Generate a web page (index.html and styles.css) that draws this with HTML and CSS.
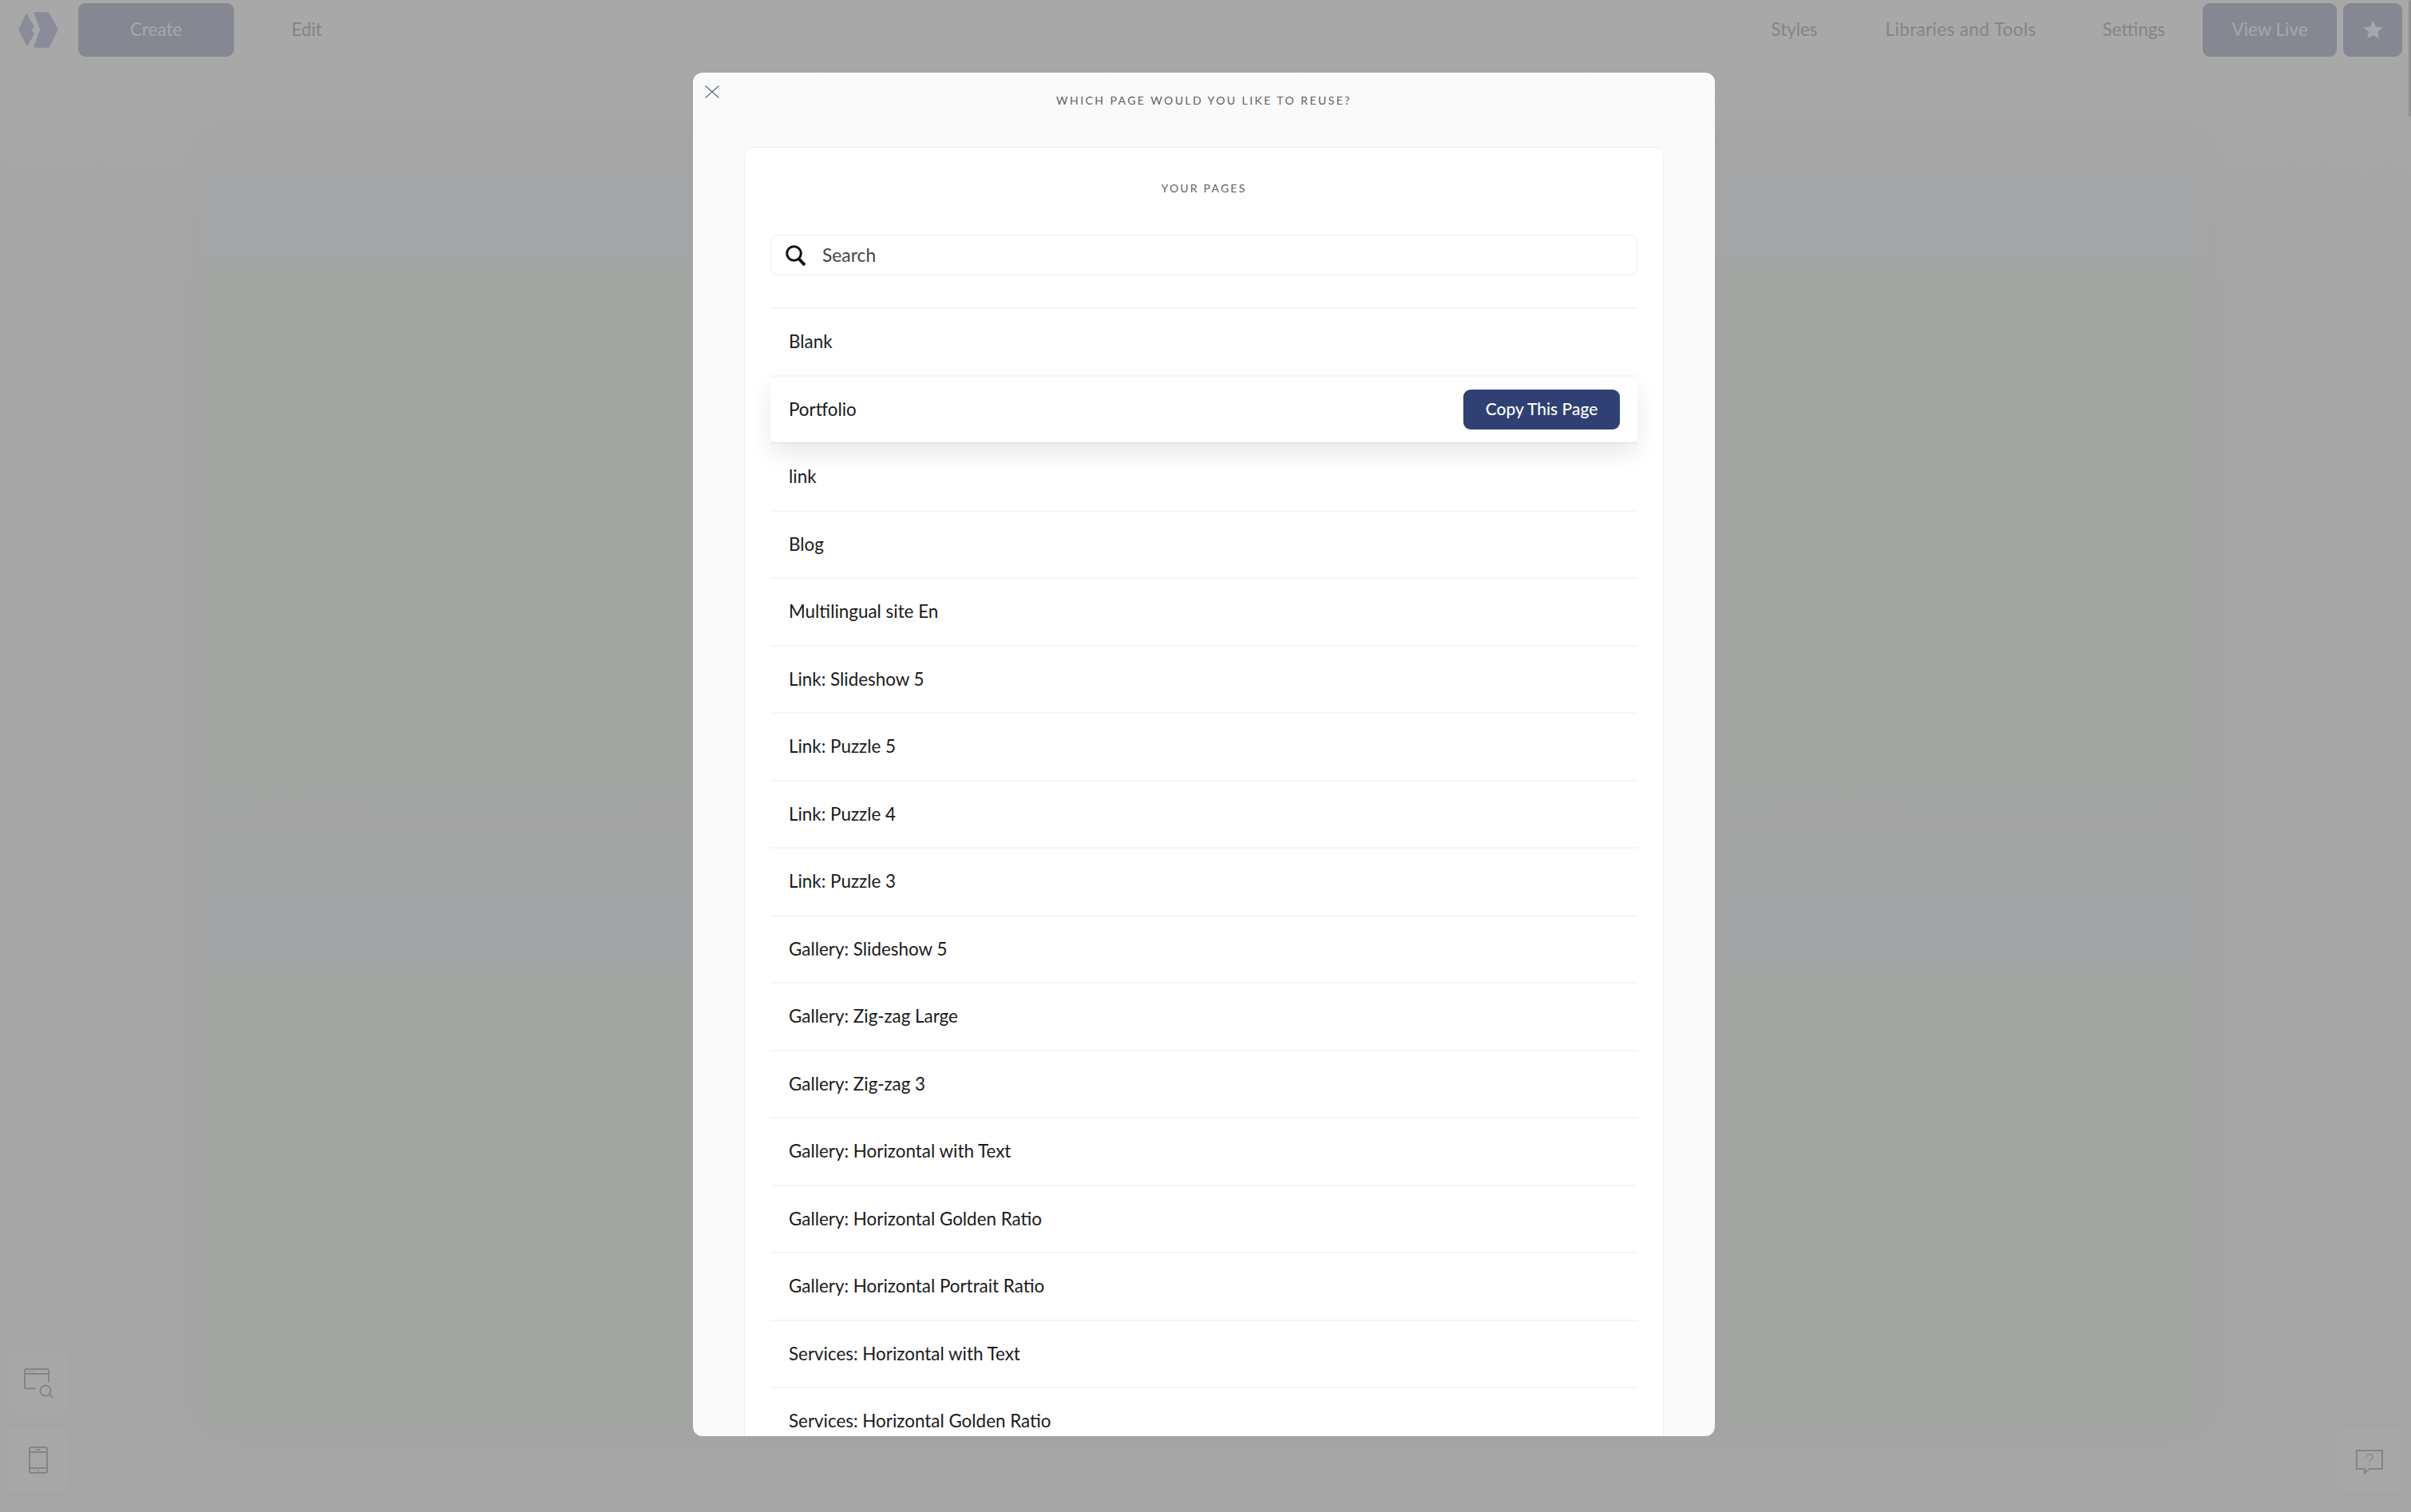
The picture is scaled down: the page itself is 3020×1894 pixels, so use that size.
FILE: index.html
```html
<!DOCTYPE html>
<html lang="en">
<head>
<meta charset="utf-8">
<title>Which page would you like to reuse?</title>
<link rel="stylesheet" href="styles.css">
</head>
<body>
<div class="app">
  <header class="topbar">
    <svg class="logo" viewBox="0 0 50 45" aria-hidden="true"><path d="M1 22 10 3l9 15-3 5 3 5-8 14z"/><path d="M20 1h18l11 21-11 22H20l8-22z"/></svg>
    <nav class="nav-left">
      <a class="btn btn-create">Create</a>
      <a class="nav-link nav-edit">Edit</a>
    </nav>
    <nav class="nav-right">
      <a class="nav-link nav-styles">Styles</a>
      <a class="nav-link nav-libs">Libraries and Tools</a>
      <a class="nav-link nav-settings">Settings</a>
      <a class="btn btn-live">View Live</a>
      <a class="btn btn-star"><svg viewBox="0 0 24 24" aria-hidden="true"><path d="M12 1.500l3.200 7 7.300.8-5.400 5 1.500 7.400L12 18l-6.600 3.700 1.500-7.400-5.400-5 7.300-.8z"/></svg></a>
    </nav>
  </header>
  <main class="stage">
    <div class="canvas"></div>
  </main>
  <div class="scroll-thumb"></div>
  <aside class="tools-left">
    <div class="tile"><svg viewBox="0 0 36 36" aria-hidden="true"><path d="M15 25.300H2.500a1.500 1.500 0 0 1-1.500-1.500V2.500A1.500 1.500 0 0 1 2.500 1h27A1.500 1.500 0 0 1 31 2.500v15M1 7h30"/><path class="dots" d="M5.500 4.200h1M8 4.200h1M10.500 4.200h1"/><circle cx="27" cy="28" r="6.500"/><path d="M31.500 32.500l4.500 4"/></svg></div>
    <div class="tile"><svg viewBox="0 0 36 36" aria-hidden="true"><rect x="7" y="2" width="22" height="32" rx="2"/><path d="M7 8h22M7 28h22M15.500 5h5M17 31h2"/></svg></div>
  </aside>
  <aside class="tools-right">
    <div class="tile"><svg class="thin" viewBox="0 0 36 36" aria-hidden="true"><path class="bubble" d="M2 6h32v23H18l-6 5v-5H2z"/><path d="M14 14.500c0-5 8-5 8-.5 0 3-4 3-4 6.500M18 23v1.500"/></svg></div>
  </aside>
</div>

<div class="modal-wrap">
  <section class="modal">
    <button class="close" aria-label="Close"><svg viewBox="0 0 18 16" preserveAspectRatio="none" aria-hidden="true"><path d="M.5.500l17 15M17.500.500l-17 15"/></svg></button>
    <h1 class="modal-title">WHICH PAGE WOULD YOU LIKE TO REUSE?</h1>
    <div class="card">
      <h2 class="card-title">YOUR PAGES</h2>
      <div class="search">
        <svg viewBox="0 0 26 26" aria-hidden="true"><circle cx="10.500" cy="10.500" r="8.800"/><path class="handle" d="M16.500 17l7.500 8"/></svg>
        <span>Search</span>
      </div>
      <ul class="pages">
        <li class="row"><span>Blank</span></li>
        <li class="row row-active"><span>Portfolio</span><a class="copy">Copy This Page</a></li>
        <li class="row"><span>link</span></li>
        <li class="row"><span>Blog</span></li>
        <li class="row"><span>Multilingual site En</span></li>
        <li class="row"><span>Link: Slideshow 5</span></li>
        <li class="row"><span>Link: Puzzle 5</span></li>
        <li class="row"><span>Link: Puzzle 4</span></li>
        <li class="row"><span>Link: Puzzle 3</span></li>
        <li class="row"><span>Gallery: Slideshow 5</span></li>
        <li class="row"><span>Gallery: Zig-zag Large</span></li>
        <li class="row"><span>Gallery: Zig-zag 3</span></li>
        <li class="row"><span>Gallery: Horizontal with Text</span></li>
        <li class="row"><span>Gallery: Horizontal Golden Ratio</span></li>
        <li class="row"><span>Gallery: Horizontal Portrait Ratio</span></li>
        <li class="row"><span>Services: Horizontal with Text</span></li>
        <li class="row"><span>Services: Horizontal Golden Ratio</span></li>
      </ul>
    </div>
  </section>
</div>
</body>
</html>
```
FILE: styles.css
```css
* { box-sizing: border-box; }
html, body { margin: 0; height: 100%; overflow: hidden; }
body { font-family: "Lato", "Liberation Sans", sans-serif; background: #a5a5a5; color: #111; }

.app { position: relative; width: 3020px; height: 1894px; display: flex; flex-direction: column; background: linear-gradient(#a8a8a8, #a5a5a5 400px); overflow: hidden; }

.topbar { height: 80px; flex: none; display: flex; align-items: flex-start; border-bottom: 1px solid #a5a5a5; background: #a8a8a8; padding: 4px 11px 0 23px; font-size: 22.400px; }
.logo { width: 50px; height: 45px; margin-top: 11px; flex: none; fill: #8a8d99; stroke: #8a8d99; stroke-width: 1.500; stroke-linejoin: round; }
.nav-left { display: flex; align-items: center; margin-left: 25px; }
.nav-right { display: flex; align-items: center; margin-left: auto; }
.btn { display: flex; align-items: center; justify-content: center; height: 67px; padding-bottom: 2px; background: #858791; color: #a6a7ab; border-radius: 9px; }
.btn-create { width: 195px; }
.btn-live { width: 168px; margin-left: 47px; }
.btn-star { width: 74px; margin-left: 8px; padding-bottom: 0; }
.btn-star svg { width: 27px; height: 27px; fill: #a6a7ab; }
.nav-link { color: #858585; padding-bottom: 2px; }
.nav-edit { margin-left: 72px; }
.nav-libs { margin-left: 85px; letter-spacing: .4px; }
.nav-settings { margin-left: 83px; }

.stage { flex: 1; padding: 92px 257px 106px 253px; }
.canvas { height: 100%; border-radius: 6px 6px 0 0; box-shadow: 0 0 50px rgba(0,0,0,.02); background: linear-gradient(#a5a5a5 0, #a5a5a5 40px, #a4a5a7 40px, #a4a5a7 152px, #a3a5a3 152px, #a3a5a3 820px, #a3a4a6 980px, #a3a4a6 1031px, #a3a5a3 1031px); }

.scroll-thumb { position: absolute; top: 0; right: 0; width: 3px; height: 146px; background: #8f8f8f; border-radius: 2px; }

.tools-left { position: absolute; left: 8px; bottom: 25px; display: flex; flex-direction: column; gap: 17px; }
.tools-right { position: absolute; right: 12px; bottom: 25px; }
.tile { width: 80px; height: 80px; border-radius: 10px; background: #a7a7a7; display: flex; align-items: center; justify-content: center; }
.tile svg { width: 36px; height: 36px; fill: none; stroke: #858585; stroke-width: 2; overflow: visible; }
.tile .dots { stroke-width: 1.500; }
.tile .thin { stroke-width: 1.200; }
.tile .bubble { stroke-width: 2; }

.modal-wrap { position: absolute; inset: 0; padding: 91px 872px 95px 868px; }
.modal { position: relative; height: 100%; background: #fafafa; border-radius: 12px; overflow: hidden; padding: 0 64px; }
.close { position: absolute; left: 15px; top: 16px; width: 18px; height: 16px; padding: 0; border: 0; background: none; display: block; }
.close svg { display: block; width: 18px; height: 16px; fill: none; stroke: #5c6a7d; stroke-width: 1.200; }
.modal-title { margin: 0; height: 93px; padding-top: 25px; text-align: center; font-size: 14px; line-height: 20px; font-weight: 400; letter-spacing: 2.430px; color: #5f5f5f; }

.card { background: #fff; border: 1px solid #efefef; border-radius: 12px; padding: 0 32px; height: 1700px; }
.card-title { margin: 0; height: 109px; padding-top: 41px; text-align: center; font-size: 14px; line-height: 20px; font-weight: 400; letter-spacing: 2.200px; color: #5f5f5f; }

.search { height: 51px; border: 1px solid #efefef; border-radius: 10px; display: flex; align-items: center; padding-left: 18px; font-size: 22.800px; color: #444; }
.search span { padding-bottom: 2px; }
.search svg { width: 26px; height: 26px; fill: none; stroke: #111; stroke-width: 3; margin-right: 20px; flex: none; }
.search .handle { stroke-width: 4; }

.pages { list-style: none; margin: 40px 0 0; padding: 0; }
.row { height: 84.500px; border-top: 2px solid #f5f5f5; display: flex; align-items: center; justify-content: space-between; padding: 0 23px; font-size: 22.400px; color: #1a1a1a; }
.row span { padding-bottom: 1px; }
.row-active { border-radius: 6px; box-shadow: 0 14px 30px rgba(0,0,0,.09); background: #fff; position: relative; padding-right: 22px; }
.copy { display: flex; align-items: center; justify-content: center; width: 196px; height: 50px; padding-bottom: 2px; border-radius: 9px; background: #2f4074; color: #fff; font-size: 21px; font-weight: 500; }
```
